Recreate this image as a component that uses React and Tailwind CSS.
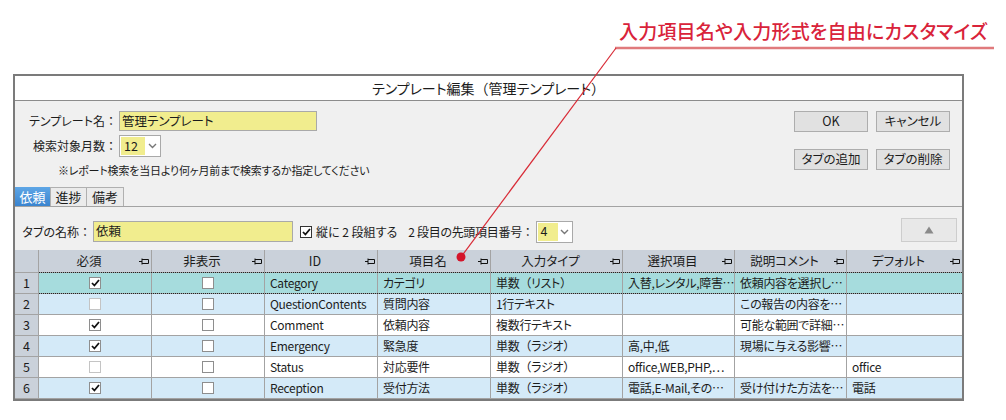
import React from 'react'

const rows = [
  { n: 1, req: true, reqDim: false, id: 'Category', name: 'カテゴリ', type: '単数（リスト）', opts: '入替,レンタル,障害⋯', note: '依頼内容を選択し⋯', def: '', bg: 'bg-[#a6dcdd]', sel: true },
  { n: 2, req: false, reqDim: true, id: 'QuestionContents', name: '質問内容', type: '1行テキスト', opts: '', note: 'この報告の内容を⋯', def: '', bg: 'bg-[#d4eaf8]' },
  { n: 3, req: true, reqDim: false, id: 'Comment', name: '依頼内容', type: '複数行テキスト', opts: '', note: '可能な範囲で詳細⋯', def: '', bg: 'bg-white' },
  { n: 4, req: true, reqDim: false, id: 'Emergency', name: '緊急度', type: '単数（ラジオ）', opts: '高,中,低', note: '現場に与える影響⋯', def: '', bg: 'bg-[#d4eaf8]' },
  { n: 5, req: false, reqDim: true, id: 'Status', name: '対応要件', type: '単数（ラジオ）', opts: 'office,WEB,PHP,⋯', note: '', def: 'office', bg: 'bg-white' },
  { n: 6, req: true, reqDim: false, id: 'Reception', name: '受付方法', type: '単数（ラジオ）', opts: '電話,E-Mail,その⋯', note: '受け付けた方法を⋯', def: '電話', bg: 'bg-[#d4eaf8]' },
]

const headers = ['必須', '非表示', 'ID', '項目名', '入力タイプ', '選択項目', '説明コメント', 'デフォルト']

const cols = 'grid grid-cols-[24px_113px_113px_113px_113px_132px_112px_112px_1fr]'

// full-width brackets and colons keep their full width, the rest is proportional (palt)
function Jp({ children }) {
  if (typeof children !== 'string') return children
  return children.split(/([（）：])/).map((part, i) =>
    /^[（）：]$/.test(part)
      ? <span key={i} className="[font-feature-settings:normal]">{part}</span>
      : part
  )
}

export default function App() {
  return (
    <div className="relative w-[1006px] h-[420px] bg-white overflow-hidden font-['Noto_Sans_CJK_JP','Noto_Sans',sans-serif] [font-feature-settings:'palt'] text-[#1c1c1c]">
      <div className="h-[74px] pt-[19px] pl-[619px]">
        <p className="text-[19px] leading-[24px] font-medium text-[#d9233a] tracking-[0.2px]">入力項目名や入力形式を自由にカスタマイズ</p>
      </div>

      <div className="ml-[13px] w-[951px] border-2 border-[#7b7b7b] bg-[#f0f0f0]">
        <div className="h-[25px] bg-white border-b border-[#8c8c8c] flex items-center justify-center text-[14px] leading-none">
          <Jp>テンプレート編集（管理テンプレート）</Jp>
        </div>

        <div className="flex justify-between">
          <div className="pt-[10px]">
            <div className="flex items-center h-[20px]">
              <span className="w-[104px] text-right pr-[2px] text-[12px]"><Jp>テンプレート名：</Jp></span>
              <div className="w-[198px] h-[20px] border border-[#a9a9a9] bg-[#f1ed8e] flex items-center pl-[2px] text-[12.5px]">管理テンプレート</div>
            </div>
            <div className="flex items-center h-[22px] mt-[4px]">
              <span className="w-[104px] text-right pr-[2px] text-[12px]"><Jp>検索対象月数：</Jp></span>
              <Select value="12" width="w-[42px]" inner="w-[24px]" />
            </div>
            <p className="mt-[5px] pl-[43px] text-[11px] leading-[16px] tracking-[-0.2px]">※レポート検索を当日より何ヶ月前まで検索するか指定してください</p>
          </div>
          <div className="pt-[10px] pr-[12px] grid grid-cols-2 gap-x-[8px] gap-y-[8px] text-[12.5px]">
            <Btn>OK</Btn>
            <Btn>キャンセル</Btn>
            <Btn>タブの追加</Btn>
            <Btn>タブの削除</Btn>
          </div>
        </div>

        <div className="mt-[9px] flex items-end border-b border-[#a3a3a3] text-[13px]">
          <div className="w-[35px] h-[19px] flex items-center justify-center text-white bg-gradient-to-b from-[#5ea6e6] to-[#3a84cf]">依頼</div>
          <div className="w-[37px] h-[19px] flex items-center justify-center bg-[#ebebeb] border-x border-t border-[#b0b0b0]">進捗</div>
          <div className="w-[37px] h-[19px] flex items-center justify-center bg-[#ebebeb] border-r border-t border-[#b0b0b0]">備考</div>
        </div>

        <div className="pt-[11px] pb-[8px] pr-[5px] flex items-end justify-between">
          <div className="flex items-center h-[21px] text-[12px]">
            <span className="w-[78px] text-right pr-[2px]"><Jp>タブの名称：</Jp></span>
            <div className="w-[200px] h-[21px] border border-[#a9a9a9] bg-[#f1ed8e] flex items-center pl-[2px] text-[12.5px]">依頼</div>
            <div className="ml-[7px] w-[12px] h-[12px] border border-[#333] bg-white flex items-center justify-center">
              <Check />
            </div>
            <span className="ml-[4px]">縦に 2 段組する</span>
            <span className="ml-[11px] tracking-[-0.3px]"><Jp>2 段目の先頭項目番号：</Jp></span>
            <div className="ml-[2px]">
              <Select value="4" width="w-[37px]" inner="w-[20px]" h="h-[22px]" />
            </div>
          </div>
          <div className="w-[56px] h-[24px] bg-[#e8e8e8] border border-[#cdcdcd] flex items-center justify-center">
            <svg width="10" height="8" viewBox="0 0 10 8"><path d="M5 0.5L9.5 7.5H0.5Z" fill="#8a8a8a" /></svg>
          </div>
        </div>

        <div className="text-[12px]">
          <div className={`${cols} h-[23px] bg-[#cad1da] text-[12.5px]`}>
            <div className="border-r border-b border-[#a3a3a3]" />
            {headers.map((h) => (
              <div key={h} className="flex items-center border-r border-b border-[#a3a3a3] last:border-r-0">
                <span className="flex-1 text-center">{h}</span>
                <Pin />
              </div>
            ))}
          </div>
          {rows.map((r) => (
            <div key={r.n} className={`${cols} relative h-[21px] ${r.bg}`}>
              <div className="bg-[#cad1da] border-r border-b border-[#a3a3a3] flex items-center pl-[8px] text-[12.5px]">{r.n}</div>
              <Cell center><Box checked={r.req} dim={r.reqDim} /></Cell>
              <Cell center><Box /></Cell>
              <Cell>{r.id}</Cell>
              <Cell>{r.name}</Cell>
              <Cell><Jp>{r.type}</Jp></Cell>
              <Cell>{r.opts}</Cell>
              <Cell>{r.note}</Cell>
              <Cell last>{r.def}</Cell>
              {r.sel && (
                <div className="absolute left-[24px] right-0 top-[-1px] bottom-0 border-y border-dotted border-[#222] pointer-events-none" />
              )}
            </div>
          ))}
        </div>
      </div>

      <svg className="absolute inset-0 pointer-events-none" width="1006" height="420" viewBox="0 0 1006 420">
        <line x1="615" y1="48" x2="994" y2="48" stroke="#e07a7c" strokeWidth="2.5" />
        <line x1="616" y1="48" x2="461" y2="257" stroke="#d82a36" strokeWidth="1.2" />
        <circle cx="461" cy="257" r="4.5" fill="#d4142a" />
      </svg>
    </div>
  )
}

function Cell({ children, center, last }) {
  return (
    <div className={`flex items-center border-b border-[#a3a3a3] ${last ? '' : 'border-r'} ${center ? 'justify-center' : 'pl-[5px] tracking-[-0.3px]'} whitespace-nowrap overflow-hidden`}>
      {children}
    </div>
  )
}

function Box({ checked, dim }) {
  return (
    <div className={`w-[12px] h-[12px] bg-white border ${dim ? 'border-[#c4c4c4]' : 'border-[#8e8e8e]'} flex items-center justify-center`}>
      {checked && <Check />}
    </div>
  )
}

function Check() {
  return (
    <svg width="9" height="8" viewBox="0 0 9 8">
      <path d="M1 4L3.4 6.5L8 1" stroke="#111" strokeWidth="1.8" fill="none" />
    </svg>
  )
}

function Pin() {
  return (
    <svg className="mr-[2px] shrink-0" width="10" height="7" viewBox="0 0 10 7">
      <path d="M0 3.5H3M3 0.5V6.5M3 1.5H9.5V5.5H3" stroke="#111" strokeWidth="1" fill="none" />
    </svg>
  )
}

function Select({ value, width, inner, h = 'h-[22px]' }) {
  return (
    <div className={`${width} ${h} border border-[#a9a9a9] bg-white flex items-stretch p-[1px]`}>
      <div className={`${inner} bg-[#f1ed8e] flex items-center pl-[3px] text-[12.5px]`}>{value}</div>
      <div className="flex-1 flex items-center justify-center">
        <svg width="9" height="6" viewBox="0 0 9 6"><path d="M1 1L4.5 4.5L8 1" stroke="#777" strokeWidth="1.4" fill="none" /></svg>
      </div>
    </div>
  )
}

function Btn({ children }) {
  return (
    <div className="w-[74px] h-[21px] bg-[#e1e1e1] border border-[#adadad] flex items-center justify-center">{children}</div>
  )
}
